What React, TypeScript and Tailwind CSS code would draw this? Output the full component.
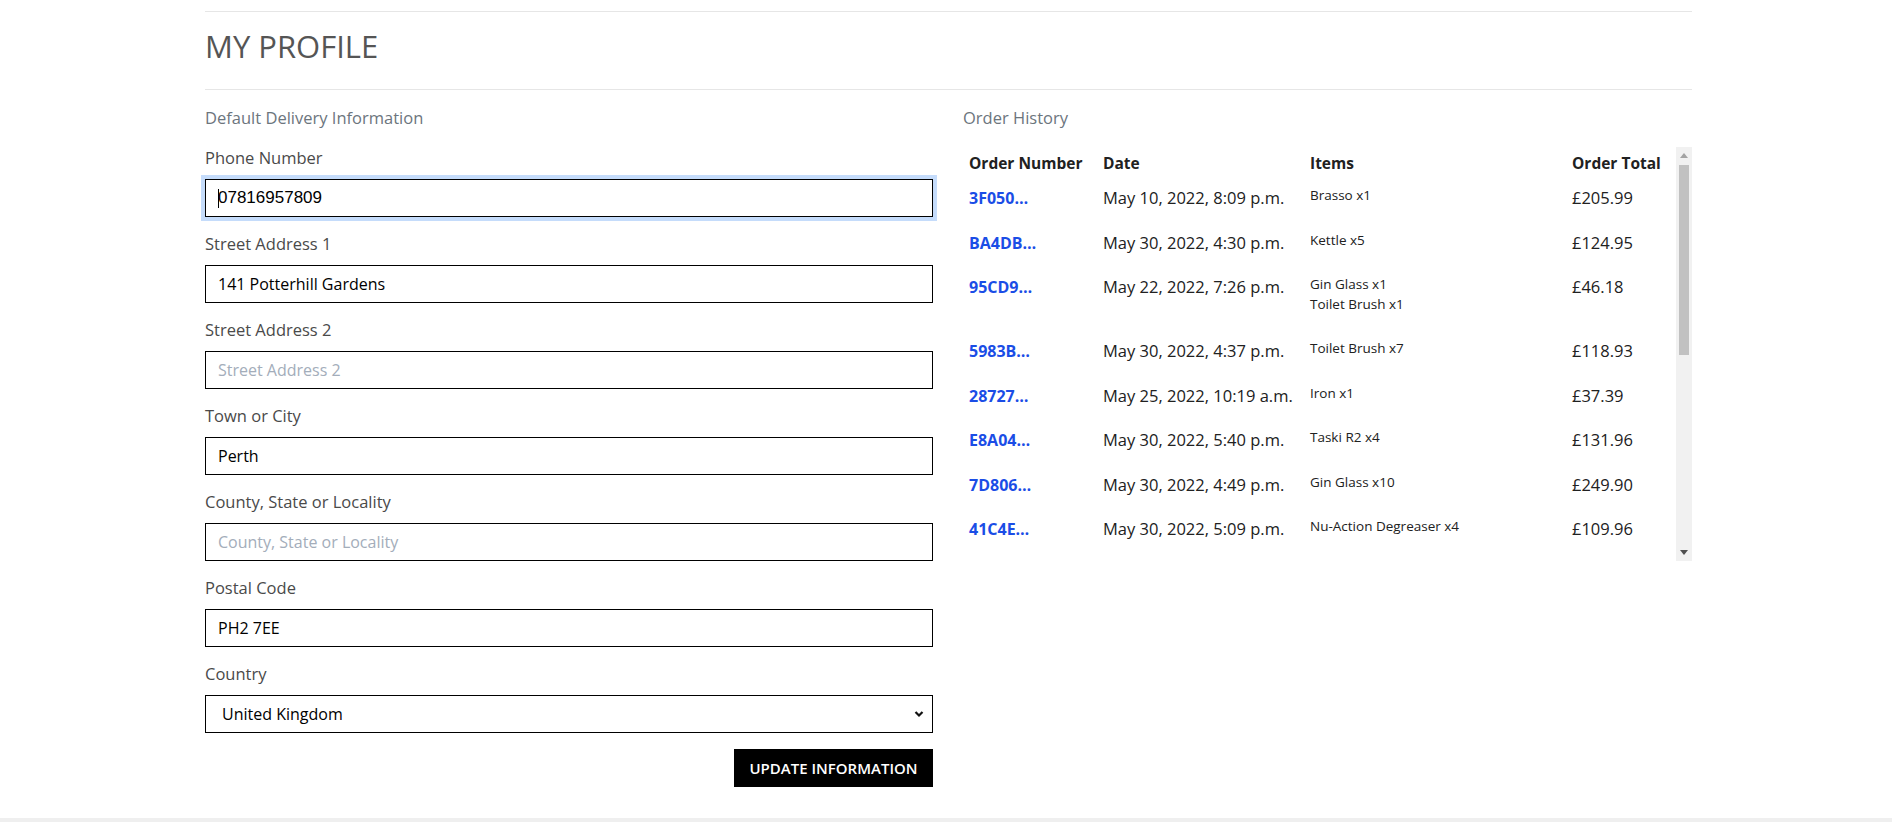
import React from "react";

const fields = [
  { label: "Phone Number", value: "07816957809", placeholder: "Phone Number", focused: true },
  { label: "Street Address 1", value: "141 Potterhill Gardens", placeholder: "Street Address 1" },
  { label: "Street Address 2", value: "", placeholder: "Street Address 2" },
  { label: "Town or City", value: "Perth", placeholder: "Town or City" },
  { label: "County, State or Locality", value: "", placeholder: "County, State or Locality" },
  { label: "Postal Code", value: "PH2 7EE", placeholder: "Postal Code" },
];

const orders = [
  { id: "3F050…", date: "May 10, 2022, 8:09 p.m.", items: ["Brasso x1"], total: "£205.99" },
  { id: "BA4DB…", date: "May 30, 2022, 4:30 p.m.", items: ["Kettle x5"], total: "£124.95" },
  { id: "95CD9…", date: "May 22, 2022, 7:26 p.m.", items: ["Gin Glass x1", "Toilet Brush x1"], total: "£46.18" },
  { id: "5983B…", date: "May 30, 2022, 4:37 p.m.", items: ["Toilet Brush x7"], total: "£118.93" },
  { id: "28727…", date: "May 25, 2022, 10:19 a.m.", items: ["Iron x1"], total: "£37.39" },
  { id: "E8A04…", date: "May 30, 2022, 5:40 p.m.", items: ["Taski R2 x4"], total: "£131.96" },
  { id: "7D806…", date: "May 30, 2022, 4:49 p.m.", items: ["Gin Glass x10"], total: "£249.90" },
  { id: "41C4E…", date: "May 30, 2022, 5:09 p.m.", items: ["Nu-Action Degreaser x4"], total: "£109.96" },
];

function Field({ label, value, placeholder, focused }) {
  return (
    <div className="mb-[15px]">
      <label className="block text-[16.5px] leading-[24px] text-[#4a4a4a] mb-[9px]">{label}</label>
      <div className="relative">
        <input
          defaultValue={value}
          placeholder={placeholder}
          className={
            focused
              ? "block w-full h-[38px] border border-black px-[12px] text-[17px] text-black font-['Liberation_Sans',sans-serif] outline-none ring-4 ring-[#c5dcfb]"
              : "block w-full h-[38px] border border-black px-[12px] text-[16px] text-black outline-none placeholder:text-[#a3adba]"
          }
        />
        {focused && <span className="absolute left-[13px] top-[10px] w-px h-[19px] bg-black" />}
      </div>
    </div>
  );
}

// drawn scrollbar, the page has overlay ones
function ScrollTrack() {
  return (
    <div className="w-[16px] shrink-0 bg-[#f1f1f1] flex flex-col items-center">
      <svg className="mt-[6px]" width="8" height="5" viewBox="0 0 8 5">
        <path d="M0 5L4 0L8 5Z" fill="#a3a3a3" />
      </svg>
      <div className="mt-[7px] w-[10px] h-[190px] bg-[#c1c1c1]" />
      <div className="flex-1" />
      <svg className="mb-[6px]" width="8" height="5" viewBox="0 0 8 5">
        <path d="M0 0L8 0L4 5Z" fill="#505050" />
      </svg>
    </div>
  );
}

function OrderTable() {
  const td = "pl-[6px] pt-[4px] pb-[5px]";
  return (
    <div className="mt-[17px] h-[414px] flex">
      <div className="flex-1 overflow-hidden">
        <table className="w-full border-collapse text-[#212121]">
          <thead>
            <tr className="text-left">
              <th className="w-[134px] pl-[6px] pt-[4px] pb-[7px] text-[15.5px] leading-[24px] font-bold">Order Number</th>
              <th className="w-[207px] pl-[6px] pt-[4px] pb-[7px] text-[15.5px] leading-[24px] font-bold">Date</th>
              <th className="w-[262px] pl-[6px] pt-[4px] pb-[7px] text-[15.5px] leading-[24px] font-bold">Items</th>
              <th className="pl-[6px] pt-[4px] pb-[7px] text-[15.5px] leading-[24px] font-bold">Order Total</th>
            </tr>
          </thead>
          <tbody>
            {orders.map((o) => (
              <tr key={o.id} className="align-top">
                <td className={td + " text-[16px] leading-[24px] font-bold text-[#1a4de6]"}>
                  <a href="#">{o.id}</a>
                </td>
                <td className={td + " text-[16.5px] leading-[24px] whitespace-nowrap"}>{o.date}</td>
                <td className={td + " text-[13.5px]"}>
                  <div className="mb-[16px]">
                    {o.items.map((it) => (
                      <div key={it} className="leading-[19.5px]">{it}</div>
                    ))}
                  </div>
                </td>
                <td className={td + " text-[16.5px] leading-[24px]"}>{o.total}</td>
              </tr>
            ))}
          </tbody>
        </table>
      </div>
      <ScrollTrack />
    </div>
  );
}

export default function App() {
  return (
    <div className="min-h-screen bg-white font-['Open_Sans',sans-serif]">
      <div className="ml-[205px] w-[1487px] pt-[11px]">
        <div className="h-px bg-[#e6e6e6]" />
        <h1 className="pt-[14px] pb-[23px] text-[31px] leading-[40px] text-[#555555]">MY PROFILE</h1>
        <div className="h-px bg-[#e6e6e6]" />
        <div className="grid grid-cols-[728px_729px] gap-x-[30px]">
          <div>
            <p className="mt-[16px] mb-[16px] text-[16.5px] leading-[24px] text-[#6c757d]">Default Delivery Information</p>
            {fields.map((f) => (
              <Field key={f.label} {...f} />
            ))}
            <div>
              <label className="block text-[16.5px] leading-[24px] text-[#4a4a4a] mb-[9px]">Country</label>
              <div className="relative">
                <select
                  defaultValue="GB"
                  className="block w-full h-[38px] appearance-none border border-black bg-white pl-[16px] text-[16px] text-black outline-none"
                >
                  <option value="GB">United Kingdom</option>
                  <option value="IE">Ireland</option>
                  <option value="US">United States</option>
                </select>
                <svg className="pointer-events-none absolute right-[9px] top-[15px]" width="10" height="8" viewBox="0 0 10 8">
                  <path d="M1.5 2l3.5 3.5L8.5 2" fill="none" stroke="#111" strokeWidth="2.2" />
                </svg>
              </div>
            </div>
            <div className="flex justify-end mt-[16px]">
              <button className="w-[199px] h-[38px] bg-black text-white text-[15px] font-semibold uppercase">
                Update Information
              </button>
            </div>
          </div>
          <div>
            <p className="mt-[16px] text-[16.5px] leading-[24px] text-[#6c757d]">Order History</p>
            <OrderTable />
          </div>
        </div>
      </div>
      <div className="mt-[31px] h-[60px] bg-[#efefef]" />
    </div>
  );
}
